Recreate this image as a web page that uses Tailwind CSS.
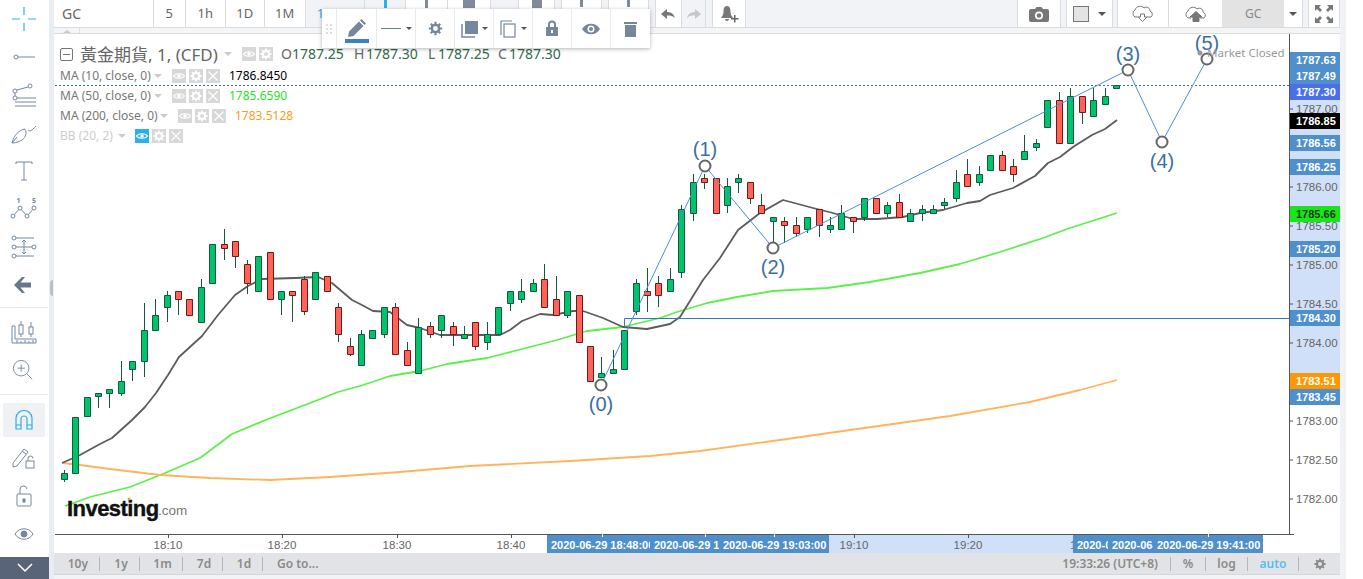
<!DOCTYPE html>
<html lang="zh-Hant">
<head>
<meta charset="utf-8">
<title>GC chart</title>
<script src="https://cdn.jsdelivr.net/npm/@tailwindcss/browser@4"></script>
</head>
<body class="w-[1363px] h-[579px] overflow-hidden bg-white flex font-['Noto_Sans','Noto_Sans_CJK_TC',sans-serif] text-[#666]">

<svg width="0" height="0" class="absolute">
  <symbol id="s-eye" viewBox="0 0 14 14"><path d="M1.5 7C3.5 4 10.500 4 12.500 7C10.500 10 3.500 10 1.500 7Z" fill="none" stroke="currentColor" stroke-width="1.200"/><circle cx="7" cy="7" r="1.800" fill="currentColor"/></symbol>
  <symbol id="s-gear" viewBox="0 0 14 14"><circle cx="7" cy="7" r="3" fill="none" stroke="currentColor" stroke-width="2"/><path d="M7 1.500V4M7 10V12.500M1.500 7H4M10 7H12.500M3.100 3.100L4.900 4.900M9.100 9.100L10.900 10.900M3.100 10.900L4.900 9.100M9.100 4.900L10.900 3.100" stroke="currentColor" stroke-width="1.800"/></symbol>
  <symbol id="s-x" viewBox="0 0 14 14"><path d="M2.500 2.500L11.500 11.500M11.500 2.500L2.500 11.500" stroke="currentColor" stroke-width="1.300"/></symbol>
</svg>

<!-- left toolbar -->
<aside class="w-[49px] h-[579px] shrink-0 flex flex-col text-[#7388a0]">
  <div class="w-[47px] flex flex-col items-center">
  <div class="h-[38px] w-full flex items-center justify-center">
    <svg width="24" height="24" viewBox="0 0 24 24" fill="none" stroke="#2db0ea" stroke-width="1.200"><path d="M12 0V8M12 16V24M0 12H8M16 12H24"/></svg>
  </div>
  <div class="h-[38px] w-full flex items-center justify-center">
    <svg width="24" height="14" viewBox="0 0 24 14" fill="none" stroke="currentColor" stroke-width="1"><circle cx="4" cy="7" r="2"/><path d="M6 7H23"/></svg>
  </div>
  <div class="h-[39px] w-full flex items-center justify-center">
    <svg width="26" height="26" viewBox="0 0 26 26" fill="none" stroke="currentColor" stroke-width="1"><circle cx="4" cy="8" r="2"/><circle cx="19" cy="3" r="2"/><circle cx="4" cy="15" r="2"/><path d="M6 7L17 4M4 10V13M6 15H25M4 19H25M4 23H25"/></svg>
  </div>
  <div class="h-[38px] w-full flex items-center justify-center">
    <svg width="26" height="22" viewBox="0 0 26 22" fill="none" stroke="currentColor" stroke-width="1"><path d="M1 20C3 12 8 7 14 6C16 10 15 14 11 17C8 19 4 20 1 20ZM1 20L6 14M17 7C19 9 20 8 25 3"/></svg>
  </div>
  <div class="h-[36px] w-full flex items-center justify-center">
    <svg width="18" height="20" viewBox="0 0 18 20" fill="none" stroke="currentColor" stroke-width="1"><path d="M1 3V1H17V3M9 1V19M6 19H12"/></svg>
  </div>
  <div class="h-[38px] w-full flex items-center justify-center">
    <svg width="28" height="24" viewBox="0 0 28 24" fill="none" stroke="currentColor" stroke-width="1"><circle cx="3" cy="20" r="2"/><circle cx="10" cy="12" r="2"/><circle cx="17" cy="20" r="2"/><circle cx="24" cy="12" r="2"/><path d="M4.500 18.500L8.700 13.500M11.300 13.500L15.700 18.500M18.400 18.500L22.700 13.500"/><text x="6.500" y="7" font-size="7" fill="currentColor" stroke="none" font-weight="700">1</text><text x="22" y="7" font-size="7" fill="currentColor" stroke="none" font-weight="700">5</text></svg>
  </div>
  <div class="h-[40px] w-full flex items-center justify-center">
    <svg width="26" height="24" viewBox="0 0 26 24" fill="none" stroke="currentColor" stroke-width="1"><circle cx="3" cy="3" r="2"/><circle cx="3" cy="12" r="2"/><circle cx="3" cy="21" r="2"/><circle cx="23" cy="12" r="2"/><path d="M5 3H23M5 12H21M5 21H23M13 5V19M11 7L13 5L15 7M11 17L13 19L15 17"/></svg>
  </div>
  <div class="h-[41px] pb-[4px] w-[49px] flex items-center justify-center border-b border-[#e4eaf0] pr-[2px]">
    <svg width="18" height="16" viewBox="0 0 18 16" fill="#66788e"><path d="M0 8L8 0H11L6.500 5.500H17V10.500H6.500L11 16H8Z"/></svg>
  </div>
  <div class="h-[48px] w-full flex items-center justify-center">
    <svg width="26" height="24" viewBox="0 0 26 24" fill="none" stroke="currentColor" stroke-width="1"><path d="M1 6H4V19H25V23H1ZM6 23V20M10 23V21M14 23V20M18 23V21M22 23V20"/><rect x="8" y="5" width="4" height="9"/><path d="M10 1V5M10 14V17"/><rect x="18" y="7" width="4" height="7"/><path d="M20 2V7M20 14V17"/></svg>
  </div>
  <div class="h-[39px] pb-[10px] w-[49px] flex items-center justify-center border-b border-[#e4eaf0] pr-[2px]">
    <svg width="22" height="22" viewBox="0 0 24 24" fill="none" stroke="currentColor" stroke-width="1"><circle cx="10" cy="10" r="8.500"/><path d="M16 16L22 22M6 10H14M10 6V14"/></svg>
  </div>
  <div class="h-[42px] w-full pt-[8px] flex justify-center">
    <div class="w-[42px] h-[34px] rounded-[2px] bg-[#eff1f4] flex items-center justify-center">
      <svg width="18" height="20" viewBox="0 0 18 20" fill="none" stroke="#2db0ea" stroke-width="1.200"><path d="M1 19V8A8 7.500 0 0 1 17 8V19H12V9A3 3 0 0 0 6 9V19ZM1 15H6M12 15H17"/></svg>
    </div>
  </div>
  <div class="h-[38px] w-full flex items-center justify-center pt-[4px]">
    <svg width="24" height="22" viewBox="0 0 24 22" fill="none" stroke="currentColor" stroke-width="1"><path d="M1 16L12 2L16 5L5 19L1 20ZM10 4L14 7"/><rect x="14" y="14" width="8" height="7"/><path d="M16 14V11.500A2.500 2.500 0 0 1 21 11.500"/></svg>
  </div>
  <div class="h-[42px] w-full flex items-center justify-center">
    <svg width="16" height="22" viewBox="0 0 16 22" fill="none" stroke="currentColor" stroke-width="1"><rect x="1" y="9" width="14" height="12" rx="1"/><path d="M4 9V5A3.500 3.500 0 0 1 11 4"/><rect x="7" y="14" width="2" height="3" fill="currentColor"/></svg>
  </div>
  <div class="h-[34px] w-full flex items-center justify-center">
    <svg width="20" height="14" viewBox="0 0 20 14" fill="none" stroke="currentColor" stroke-width="1"><path d="M1 7C5 0 15 0 19 7C15 14 5 14 1 7Z"/><circle cx="10" cy="7" r="3" fill="currentColor"/></svg>
  </div>
  </div>
  <div class="mt-auto h-[22px] w-full bg-[#5a6478] flex items-center justify-center">
    <svg width="20" height="12" viewBox="0 0 20 12" fill="none" stroke="#fff" stroke-width="1.500"><path d="M3 2L10 9L17 2"/></svg>
  </div>
</aside>

<!-- splitter -->
<div class="w-[5px] h-[579px] shrink-0 bg-[#e9ecf1] relative">
  <div class="absolute left-[1px] top-[280px] w-[3px] h-[16px] rounded-l-full bg-[#bcc0c6]"></div>
</div>

<!-- main column -->
<main class="w-[1286px] h-[579px] shrink-0 flex flex-col relative bg-[#f1f3f6]">

  <!-- top toolbar -->
  <header class="h-[28px] flex border-b border-[#d9dde2] text-[13px] text-[#666]">
    <div class="w-[99px] bg-white px-2 flex items-center text-[14px]">GC</div>
    <div class="w-[32px] bg-white border-l border-[#d9dde2] flex items-center justify-center">5</div>
    <div class="w-[40px] bg-white border-l border-[#d9dde2] flex items-center justify-center">1h</div>
    <div class="w-[39px] bg-white border-l border-[#d9dde2] flex items-center justify-center">1D</div>
    <div class="w-[41px] bg-white border-l border-[#d9dde2] flex items-center justify-center">1M</div>
    <div class="w-[53px] bg-[#f1f3f6] border-l border-[#d9dde2] flex items-center pl-[11px] text-[#2db0ea]">1m</div>
    <div class="w-[6px]"></div>
    <div class="w-[43px] bg-[#f1f3f6] border-x border-[#d9dde2] overflow-hidden flex justify-center"><div class="w-[3px] h-[8px] bg-[#2db0ea]"></div></div>
    <div class="w-[42px] bg-white border-r border-[#d9dde2] overflow-hidden flex justify-center"><div class="w-[3px] h-[8px] bg-[#7f8b99]"></div></div>
    <div class="w-[43px] bg-white border-r border-[#d9dde2] overflow-hidden flex justify-center"><div class="w-[12px] h-[8px] bg-[#7f8b99]"></div></div>
    <div class="w-[27px]"></div>
    <div class="w-[37px] bg-white border-x border-[#d9dde2] overflow-hidden flex justify-center"><div class="w-[10px] h-[8px] bg-[#7f8b99]"></div></div>
    <div class="w-[6px]"></div>
    <div class="w-[41px] bg-white border-x border-[#d9dde2] overflow-hidden flex justify-center"><div class="w-[3px] h-[7px] bg-[#7f8b99]"></div></div>
    <div class="w-[6px]"></div>
    <div class="w-[41px] bg-white border-x border-[#d9dde2] overflow-hidden flex justify-center"><div class="w-[3px] h-[7px] bg-[#7f8b99]"></div></div>
    <div class="w-[6px]"></div>
    <div class="w-[26px] bg-white border-l border-[#d9dde2] flex items-center justify-center">
      <svg width="15" height="12" viewBox="0 0 15 12" fill="#777"><path d="M0 6L6 1V4C10 4 13 6 14 10C12 8 10 7.500 6 7.500V11Z"/></svg>
    </div>
    <div class="w-[25px] bg-[#f1f3f6] border-x border-[#d9dde2] flex items-center justify-center">
      <svg width="15" height="12" viewBox="0 0 15 12" fill="#c4c7cb"><path d="M15 6L9 1V4C5 4 2 6 1 10C3 8 5 7.500 9 7.500V11Z"/></svg>
    </div>
    <div class="w-[6px]"></div>
    <div class="w-[34px] bg-white border-x border-[#d9dde2] flex items-center justify-center">
      <svg width="20" height="20" viewBox="0 0 20 20" fill="#777"><path d="M8 2C5 2 4.500 5 4.500 8C4.500 11 3 12 2 14H14C13 12 11.500 11 11.500 8C11.500 5 11 2 8 2ZM6 15A2 2 0 0 0 10 15Z"/><path d="M12 14H15V11H16.500V14H19.500V15.500H16.500V18.500H15V15.500H12Z" fill="#666"/></svg>
    </div>
    <div class="w-[271px]"></div>
    <div class="w-[45px] bg-white border-x border-[#d9dde2] flex items-center justify-center">
      <svg width="20" height="16" viewBox="0 0 20 16" fill="#777"><path fill-rule="evenodd" d="M2 3H6L7.500 1H12.500L14 3H18A2 2 0 0 1 20 5V14A2 2 0 0 1 18 16H2A2 2 0 0 1 0 14V5A2 2 0 0 1 2 3ZM10 5.500A4 4 0 1 0 10 13.500A4 4 0 1 0 10 5.500Z"/><circle cx="10" cy="9.500" r="2.300"/></svg>
    </div>
    <div class="w-[5px]"></div>
    <div class="w-[47px] bg-white border-x border-[#d9dde2] flex items-center gap-[9px] pl-[6px]">
      <div class="w-[16px] h-[16px] bg-[#e3e3e3] border border-[#777]"></div>
      <div class="w-0 h-0 border-x-[4px] border-x-transparent border-t-[4px] border-t-[#555]"></div>
    </div>
    <div class="w-[4px]"></div>
    <div class="w-[51px] bg-white border-l border-[#d9dde2] flex items-center justify-center">
      <svg width="26" height="17" viewBox="0 0 26 17" fill="none" stroke="#777" stroke-width="1"><path d="M8 12H5A4 4 0 0 1 5 5C6 1 12 0 14 3C17 1 20 3 20 6A3.500 3.500 0 0 1 21 12H17M10.500 9H14.500V12H17L12.500 16.500L8 12H10.500Z"/></svg>
    </div>
    <div class="w-[54px] bg-white border-l border-[#d9dde2] flex items-center justify-center">
      <svg width="26" height="17" viewBox="0 0 26 17" fill="none" stroke="#777" stroke-width="1"><path d="M8 13H5A4 4 0 0 1 5 6C6 2 12 1 14 4C17 2 20 4 20 7A3.500 3.500 0 0 1 21 13H17"/><path d="M13 6.500L19 12H16V16.500H10V12H7Z" fill="#777"/></svg>
    </div>
    <div class="w-[62px] bg-[#e3e3e3] flex items-center justify-center text-[12px] text-[#888]">GC</div>
    <div class="w-[19px] bg-white border-r border-[#d9dde2] flex items-center justify-center">
      <div class="w-0 h-0 border-x-[4px] border-x-transparent border-t-[4px] border-t-[#555]"></div>
    </div>
    <div class="w-[5px]"></div>
    <div class="w-[32px] bg-white border-x border-[#d9dde2] flex items-center justify-center">
      <svg width="20" height="20" viewBox="0 0 20 20" fill="#777"><path d="M1 1H7L5 3L8 6L6 8L3 5L1 7ZM19 1V7L17 5L14 8L12 6L15 3L13 1ZM1 19V13L3 15L6 12L8 14L5 17L7 19ZM19 19H13L15 17L12 14L14 12L17 15L19 13Z"/></svg>
    </div>
  </header>

  <!-- strip with the small tab -->
  <div class="h-[6px] border-b border-[#d9dde2] bg-[#f4f5f7] flex">
    <div class="w-[26px] border-r border-[#d9dde2] flex justify-center pt-[2px]"><div class="w-0 h-0 border-x-[4px] border-x-transparent border-b-[3px] border-b-[#ccc]"></div></div>
  </div>

  <!-- chart -->
  <section class="h-[519px] relative bg-white">
    <svg width="1286" height="519" viewBox="54 34 1286 519" class="block" font-family="'Liberation Sans',sans-serif">
      <!-- price axis selection band -->
      <rect x="1290" y="52" width="50" height="349" fill="#d0e0f8"/>
      <!-- time axis selection band -->
      <rect x="547" y="535" width="716" height="18" fill="#d0e0f8"/>

      <!-- last price line -->
      <path d="M55 85.500H1290" stroke="#3a62d8" stroke-dasharray="2 2" fill="none"/>

      <!-- moving averages -->
      <path d="M65 506L90 497L130 487L165 473L200 458L232 434L268 419L305 405L338 392L360 386L390 376L420 371L447 364L487 358L530 347L557 340L587 331L623 327L660 318L677 312L707 303L737 297L773 291L827 288L870 282L920 273L960 264L1000 252L1040 239L1070 228L1117 213" fill="none" stroke="#5cf04a" stroke-width="1.800" stroke-linejoin="round"/>
      <path d="M63 463L80 465L110 469L160 475L210 478L270 480L330 477L400 472L470 466L570 461L650 456L700 451L780 440L850 430L950 416L1030 402L1080 390L1117 380" fill="none" stroke="#ffb45c" stroke-width="1.800" stroke-linejoin="round"/>
      <path d="M62 463L80 455L100 444L112 438L132 420L145 407L156 393L168 375L179 357L202 336L218 315L235 295L248 286L262 279L295 278L318 277L332 283L352 300L360 304L373 311L390 312L407 325L420 328L440 335L467 335L500 335L510 330L522 321L540 314L553 315L573 311L583 311L603 318L623 327L647 329L670 324L680 317L703 280L720 258L738 230L760 213L783 200L813 208L833 213L853 219L877 219L903 217L920 213L943 210L967 203L980 201L990 195L1013 188L1035 176L1048 163L1060 157L1073 147L1092 135L1105 129L1117 120" fill="none" stroke="#5c5c5c" stroke-width="1.800" stroke-linejoin="round"/>

      <!-- wicks -->
      <path stroke="#14593f" fill="none" d="M64.500 470V482M98.500 393V408M109.500 389V408M121.500 361V396M132.500 369V381M144.500 303V377M155.500 299V315M167.500 291V322M178.500 299V315M201.500 279V287M224.500 229V260M235.500 256V268M247.500 260V294M281.500 299V315M292.500 295V322M304.500 276V315M338.500 303V342M350.500 338V356M361.500 330V334M384.500 334V338M395.500 303V307M407.500 342V350M418.500 318V327M430.500 322V338M441.500 330V338M453.500 322V346M464.500 326V334M475.500 346V350M487.500 322V350M510.500 303V311M521.500 279V303M533.500 279V283M544.500 264V279M556.500 276V299M567.500 315V318M601.500 357V373M613.500 350V369M636.500 279V315M647.500 268V312M658.500 276V307M670.500 268V279M681.500 205V278M693.500 174V221M704.500 174V189M727.500 178V213M738.500 174V193M750.500 198V204M761.500 194V205M773.500 221V242M784.500 217V243M796.500 217V237M807.500 229V233M819.500 225V237M830.500 217V233M841.500 205V213M853.500 221V233M864.500 217V221M887.500 202V217M899.500 194V202M910.500 209V213M922.500 205V221M933.500 205V209M944.500 198V209M956.500 170V202M967.500 159V174M979.500 166V186M1002.500 151V155M1013.500 159V182M1024.500 135V151M1036.500 139V151M1059.500 92V100M1070.500 88V96M1082.500 112V124M1093.500 88V100M1105.500 88V96"/>

      <!-- green bodies -->
      <path fill="#00c36b" stroke="#14593f" d="M61.500 473.500h6V479.500h-6zM72.500 417.500h6V473.500h-6zM84.500 397.500h6V416.500h-6zM95.500 393.500h6V396.500h-6zM106.500 389.500h6V393.500h-6zM118.500 381.500h6V393.500h-6zM129.500 361.500h6V369.500h-6zM141.500 330.500h6V361.500h-6zM152.500 315.500h6V330.500h-6zM164.500 295.500h6V307.500h-6zM198.500 287.500h6V322.500h-6zM209.500 244.500h6V283.500h-6zM255.500 256.500h6V291.500h-6zM278.500 291.500h6V299.500h-6zM312.500 272.500h6V299.500h-6zM358.500 334.500h6V365.500h-6zM369.500 330.500h6V338.500h-6zM381.500 307.500h6V334.500h-6zM415.500 327.500h6V373.500h-6zM438.500 315.500h6V330.500h-6zM461.500 334.500h6V338.500h-6zM484.500 334.500h6V342.500h-6zM495.500 307.500h6V334.500h-6zM507.500 291.500h6V303.500h-6zM518.500 291.500h6V299.500h-6zM530.500 283.500h6V291.500h-6zM564.500 291.500h6V315.500h-6zM598.500 373.500h6V377.500h-6zM610.500 369.500h6V373.500h-6zM621.500 330.500h6V369.500h-6zM633.500 283.500h6V311.500h-6zM667.500 279.500h6V291.500h-6zM678.500 209.500h6V272.500h-6zM690.500 182.500h6V213.500h-6zM724.500 186.500h6V205.500h-6zM735.500 178.500h6V182.500h-6zM770.500 217.500h6V221.500h-6zM804.500 217.500h6V229.500h-6zM827.500 225.500h6V229.500h-6zM838.500 213.500h6V229.500h-6zM861.500 198.500h6V217.500h-6zM884.500 205.500h6V213.500h-6zM907.500 213.500h6V221.500h-6zM919.500 209.500h6V213.500h-6zM930.500 209.500h6V213.500h-6zM941.500 202.500h6V205.500h-6zM953.500 182.500h6V198.500h-6zM976.500 174.500h6V182.500h-6zM987.500 155.500h6V170.500h-6zM1021.500 151.500h6V159.500h-6zM1033.500 143.500h6V147.500h-6zM1044.500 100.500h6V127.500h-6zM1067.500 96.500h6V143.500h-6zM1090.500 100.500h6V116.500h-6zM1102.500 96.500h6V104.500h-6zM1113.500 85.500h6V88.500h-6z"/>

      <!-- red bodies -->
      <path fill="#ff6358" stroke="#701a18" d="M175.500 291.500h6V299.500h-6zM186.500 299.500h6V315.500h-6zM221.500 244.500h6V248.500h-6zM232.500 241.500h6V256.500h-6zM244.500 264.500h6V283.500h-6zM267.500 252.500h6V299.500h-6zM289.500 291.500h6V295.500h-6zM301.500 279.500h6V311.500h-6zM324.500 276.500h6V291.500h-6zM335.500 307.500h6V334.500h-6zM347.500 346.500h6V354.500h-6zM392.500 307.500h6V354.500h-6zM404.500 350.500h6V365.500h-6zM427.500 326.500h6V334.500h-6zM450.500 326.500h6V334.500h-6zM472.500 322.500h6V346.500h-6zM541.500 279.500h6V307.500h-6zM553.500 299.500h6V315.500h-6zM576.500 295.500h6V342.500h-6zM587.500 346.500h6V381.500h-6zM644.500 291.500h6V295.500h-6zM655.500 283.500h6V295.500h-6zM701.500 178.500h6V182.500h-6zM713.500 178.500h6V213.500h-6zM747.500 182.500h6V198.500h-6zM758.500 205.500h6V213.500h-6zM781.500 221.500h6V225.500h-6zM793.500 225.500h6V233.500h-6zM816.500 209.500h6V225.500h-6zM850.500 217.500h6V221.500h-6zM873.500 198.500h6V213.500h-6zM896.500 202.500h6V217.500h-6zM964.500 174.500h6V186.500h-6zM999.500 155.500h6V170.500h-6zM1010.500 166.500h6V174.500h-6zM1056.500 100.500h6V143.500h-6zM1079.500 96.500h6V112.500h-6z"/>

      <!-- horizontal line drawing -->
      <path d="M624.500 327V318.500H1290" fill="none" stroke="#2b7bc4"/>
      <!-- wave -->
      <path d="M601 385L705 166L773 248L1128 70L1162 142L1207 59" fill="none" stroke="#4a90d9"/>
      <g fill="#fff" stroke="#666" stroke-width="2">
        <circle cx="601" cy="385" r="5.500"/><circle cx="705" cy="166" r="5.500"/><circle cx="773" cy="248" r="5.500"/><circle cx="1128" cy="70" r="5.500"/><circle cx="1162" cy="142" r="5.500"/><circle cx="1207" cy="59" r="5.500"/>
      </g>
      <g fill="#3c6f9f" font-size="20" text-anchor="middle">
        <text x="601" y="411">(0)</text><text x="705" y="156">(1)</text><text x="773" y="274">(2)</text><text x="1128" y="61">(3)</text><text x="1162" y="168">(4)</text><text x="1207" y="50">(5)</text>
      </g>
      <circle cx="1200" cy="53" r="2.500" fill="#999"/>
      <text x="1207" y="57" font-size="11.500" fill="#999" font-family="'Noto Sans',sans-serif">Market Closed</text>

      <!-- axes -->
      <path d="M1289.500 34V534.500H55M1289.500 534.500H1294" fill="none" stroke="#555"/>
      <path d="M1290 59h3M1290 76h3M1290 92h3M1290 109h3M1290 121h3M1290 143h3M1290 167h3M1290 187h3M1290 214h3M1290 226h3M1290 249h3M1290 265h3M1290 304h3M1290 318h3M1290 343h3M1290 381h3M1290 397h3M1290 421h3M1290 460h3M1290 499h3M168.500 535v3M282.500 535v3M397.500 535v3M511.500 535v3M854.500 535v3M968.500 535v3" stroke="#555" fill="none"/>

      <!-- plain price labels -->
      <g font-size="11.500" fill="#666">
        <text x="1296" y="113">1787.00</text><text x="1296" y="191">1786.00</text><text x="1296" y="230">1785.50</text><text x="1296" y="269">1785.00</text><text x="1296" y="308">1784.50</text><text x="1296" y="347">1784.00</text><text x="1296" y="425">1783.00</text><text x="1296" y="464">1782.50</text><text x="1296" y="503">1782.00</text>
      </g>
      <!-- highlighted price labels -->
      <g>
        <rect x="1290" y="52" width="50" height="33" fill="#4f8fcb"/>
        <rect x="1290" y="84" width="50" height="16" fill="#4a6fe8"/>
        <rect x="1290" y="113" width="50" height="16" fill="#000"/>
        <rect x="1290" y="135" width="50" height="16" fill="#4f8fcb"/>
        <rect x="1290" y="159" width="50" height="16" fill="#4f8fcb"/>
        <rect x="1290" y="206" width="50" height="16" fill="#19e619"/>
        <rect x="1290" y="241" width="50" height="16" fill="#4f8fcb"/>
        <rect x="1290" y="310" width="50" height="16" fill="#4f8fcb"/>
        <rect x="1290" y="373" width="50" height="16" fill="#ff9800"/>
        <rect x="1290" y="389" width="50" height="16" fill="#4f8fcb"/>
      </g>
      <g font-size="11" font-weight="700" fill="#fff">
        <text x="1296" y="64">1787.63</text><text x="1296" y="80">1787.49</text><text x="1296" y="96">1787.30</text><text x="1296" y="125">1786.85</text><text x="1296" y="147">1786.56</text><text x="1296" y="171">1786.25</text><text x="1296" y="218" fill="#1a3a1a">1785.66</text><text x="1296" y="253">1785.20</text><text x="1296" y="322">1784.30</text><text x="1296" y="385">1783.51</text><text x="1296" y="401">1783.45</text>
      </g>

      <!-- time labels -->
      <g font-size="11.500" fill="#666" text-anchor="middle">
        <text x="168" y="549">18:10</text><text x="282" y="549">18:20</text><text x="397" y="549">18:30</text><text x="511" y="549">18:40</text><text x="854" y="549">19:10</text><text x="968" y="549">19:20</text>
      </g>
      <text x="1070" y="549" font-size="11.500" fill="#666">1</text>
      <g font-size="11" font-weight="700" fill="#fff">
        <rect x="547" y="535" width="104" height="18" fill="#4f8fcb"/><text x="551" y="549">2020-06-29 18:48:00</text>
        <rect x="650" y="535" width="70" height="18" fill="#4f8fcb"/><text x="654" y="549">2020-06-29 19:03:00</text>
        <rect x="719" y="535" width="110" height="18" fill="#4f8fcb"/><text x="723" y="549">2020-06-29 19:03:00</text>
        <rect x="1073" y="535" width="36" height="18" fill="#4f8fcb"/><text x="1077" y="549">2020-06-29</text>
        <rect x="1108" y="535" width="46" height="18" fill="#4f8fcb"/><text x="1112" y="549">2020-06-29</text>
        <rect x="1153" y="535" width="110" height="18" fill="#4f8fcb"/><text x="1157" y="549">2020-06-29 19:41:00</text>
      </g>
      <path d="M602.500 534v3M705.500 534v3M774.500 534v3M1208.500 534v3" stroke="#fff" fill="none"/>

      <!-- watermark -->
      <text x="67" y="516" font-size="22" font-weight="700" fill="#111" stroke="#111" stroke-width="0.400" letter-spacing="-0.550">Investing</text>
      <text x="158" y="515" font-size="13.500" fill="#777">.com</text>
      <circle cx="129" cy="499" r="1.500" fill="#f7a01d"/>
    </svg>

    <!-- legend overlay -->
    <div class="absolute left-[6px] top-[10px] flex flex-col items-start">
      <div class="h-[22px] pb-[2px] flex items-center">
        <div class="w-[13px] h-[13px] border border-[#777] rounded-[2px] flex items-center justify-center"><div class="w-[7px] h-px bg-[#777]"></div></div>
        <div class="w-[143px] ml-[7px] text-[17px] leading-none whitespace-nowrap text-[#666]">黃金期貨, 1, (CFD)</div>
        <div class="w-0 h-0 border-x-[4px] border-x-transparent border-t-[4px] border-t-[#ccc] ml-[1px]"></div>
        <div class="w-[14px] h-[14px] bg-[#d8d8d8] text-white ml-[10px]"><svg width="14" height="14"><use href="#s-eye"/></svg></div>
        <div class="w-[14px] h-[14px] bg-[#d8d8d8] text-white ml-[3px]"><svg width="14" height="14"><use href="#s-gear"/></svg></div>
        <div class="ml-[8px] text-[14px] leading-none whitespace-nowrap text-[#2f6a4c] flex">
          <span class="w-[11px] text-[#666]">O</span><span class="w-[62px]">1787.25</span>
          <span class="w-[12px] text-[#666]">H</span><span class="w-[62px]">1787.30</span>
          <span class="w-[10px] text-[#666]">L</span><span class="w-[60px]">1787.25</span>
          <span class="w-[11px] text-[#666]">C</span><span>1787.30</span>
        </div>
      </div>
      <div class="h-[20px] flex items-center text-[12px] text-[#777] whitespace-nowrap">
        <span class="w-[89px]">MA (10, close, 0)</span>
        <div class="w-0 h-0 border-x-[4px] border-x-transparent border-t-[4px] border-t-[#ccc] ml-[5px]"></div>
        <div class="w-[14px] h-[14px] bg-[#d8d8d8] text-white ml-[10px]"><svg width="14" height="14"><use href="#s-eye"/></svg></div>
        <div class="w-[14px] h-[14px] bg-[#d8d8d8] text-white ml-[3px]"><svg width="14" height="14"><use href="#s-gear"/></svg></div>
        <div class="w-[14px] h-[14px] bg-[#d8d8d8] text-white ml-[3px]"><svg width="14" height="14"><use href="#s-x"/></svg></div>
        <span class="ml-[9px] text-black">1786.8450</span>
      </div>
      <div class="h-[20px] flex items-center text-[12px] text-[#777] whitespace-nowrap">
        <span class="w-[89px]">MA (50, close, 0)</span>
        <div class="w-0 h-0 border-x-[4px] border-x-transparent border-t-[4px] border-t-[#ccc] ml-[5px]"></div>
        <div class="w-[14px] h-[14px] bg-[#d8d8d8] text-white ml-[10px]"><svg width="14" height="14"><use href="#s-eye"/></svg></div>
        <div class="w-[14px] h-[14px] bg-[#d8d8d8] text-white ml-[3px]"><svg width="14" height="14"><use href="#s-gear"/></svg></div>
        <div class="w-[14px] h-[14px] bg-[#d8d8d8] text-white ml-[3px]"><svg width="14" height="14"><use href="#s-x"/></svg></div>
        <span class="ml-[9px] text-[#1ee61e]">1785.6590</span>
      </div>
      <div class="h-[20px] flex items-center text-[12px] text-[#777] whitespace-nowrap">
        <span class="w-[95px]">MA (200, close, 0)</span>
        <div class="w-0 h-0 border-x-[4px] border-x-transparent border-t-[4px] border-t-[#ccc] ml-[5px]"></div>
        <div class="w-[14px] h-[14px] bg-[#d8d8d8] text-white ml-[10px]"><svg width="14" height="14"><use href="#s-eye"/></svg></div>
        <div class="w-[14px] h-[14px] bg-[#d8d8d8] text-white ml-[3px]"><svg width="14" height="14"><use href="#s-gear"/></svg></div>
        <div class="w-[14px] h-[14px] bg-[#d8d8d8] text-white ml-[3px]"><svg width="14" height="14"><use href="#s-x"/></svg></div>
        <span class="ml-[9px] text-[#ff9a1f]">1783.5128</span>
      </div>
      <div class="h-[20px] flex items-center text-[12px] text-[#ccc] whitespace-nowrap">
        <span class="w-[53px]">BB (20, 2)</span>
        <div class="w-0 h-0 border-x-[4px] border-x-transparent border-t-[4px] border-t-[#ccc] ml-[5px]"></div>
        <div class="w-[14px] h-[14px] bg-[#2db0ea] text-white ml-[9px]"><svg width="14" height="14"><use href="#s-eye"/></svg></div>
        <div class="w-[14px] h-[14px] bg-[#d8d8d8] text-white ml-[3px]"><svg width="14" height="14"><use href="#s-gear"/></svg></div>
        <div class="w-[14px] h-[14px] bg-[#d8d8d8] text-white ml-[3px]"><svg width="14" height="14"><use href="#s-x"/></svg></div>
      </div>
    </div>
  </section>

  <!-- bottom bar -->
  <footer class="h-[22px] bg-[#e2e3e6] border-b border-[#d5d7da] flex items-center text-[12px] font-semibold text-[#8a8a8a]">
    <div class="w-[46px] pr-[11px] border-r border-[#b5b7ba] h-[14px] flex items-center justify-end">10y</div>
    <div class="w-[40px] pl-[3px] border-r border-[#b5b7ba] h-[14px] flex items-center justify-center">1y</div>
    <div class="w-[43px] pl-[3px] border-r border-[#b5b7ba] h-[14px] flex items-center justify-center">1m</div>
    <div class="w-[40px] pl-[3px] border-r border-[#b5b7ba] h-[14px] flex items-center justify-center">7d</div>
    <div class="w-[40px] pl-[3px] border-r border-[#b5b7ba] h-[14px] flex items-center justify-center">1d</div>
    <div class="ml-[14px]">Go to...</div>
    <div class="ml-auto pr-[12px] border-r border-[#b5b7ba] h-[14px] flex items-center">19:33:26 (UTC+8)</div>
    <div class="w-[35px] border-r border-[#b5b7ba] h-[14px] flex items-center justify-center">%</div>
    <div class="w-[42px] border-r border-[#b5b7ba] h-[14px] flex items-center justify-center">log</div>
    <div class="w-[51px] border-r border-[#b5b7ba] h-[14px] flex items-center justify-center text-[#5bbde8]">auto</div>
    <div class="w-[41px] flex items-center justify-center text-[#8a8a8a]"><svg width="14" height="14"><use href="#s-gear"/></svg></div>
  </footer>

  <!-- floating drawing toolbar -->
  <div class="absolute left-[268px] top-[9px] w-[328px] h-[39px] bg-white shadow-[0_1px_4px_rgba(0,0,0,0.3)] flex text-[#76879c]">
    <div class="w-[14px] flex items-center justify-center">
      <div class="grid grid-cols-2 gap-[2px]">
        <div class="w-[2px] h-[2px] bg-[#ddd]"></div><div class="w-[2px] h-[2px] bg-[#ddd]"></div>
        <div class="w-[2px] h-[2px] bg-[#ddd]"></div><div class="w-[2px] h-[2px] bg-[#ddd]"></div>
        <div class="w-[2px] h-[2px] bg-[#ddd]"></div><div class="w-[2px] h-[2px] bg-[#ddd]"></div>
      </div>
    </div>
    <div class="w-[40px] border-l border-[#e8eaed] flex flex-col items-center pt-[10px] relative">
      <svg width="18" height="18" viewBox="0 0 18 18" fill="currentColor"><path d="M0 18L1 12.500L11 2.500L15.500 7L5.500 17ZM12 1.500L13.500 0L18 4.500L16.500 6Z"/></svg>
      <div class="absolute left-[8px] top-[30px] w-[24px] h-[4px] bg-[#3b7fc4]"></div>
    </div>
    <div class="w-[39px] border-l border-[#e8eaed] flex items-center justify-center gap-[5px]">
      <div class="w-[20px] h-px bg-[#5b7ea6]"></div>
      <div class="w-0 h-0 border-x-[3px] border-x-transparent border-t-[3px] border-t-[#555]"></div>
    </div>
    <div class="w-[39px] border-l border-[#e8eaed] flex items-center justify-center">
      <svg width="17" height="17"><use href="#s-gear"/></svg>
    </div>
    <div class="w-[39px] border-l border-[#e8eaed] flex items-center justify-center gap-[3px]">
      <svg width="18" height="18" viewBox="0 0 18 18" fill="currentColor"><rect x="4" y="1" width="13" height="13"/><path d="M1 4V17H14" fill="none" stroke="currentColor" stroke-width="1.500"/></svg>
      <div class="w-0 h-0 border-x-[3px] border-x-transparent border-t-[3px] border-t-[#555]"></div>
    </div>
    <div class="w-[39px] border-l border-[#e8eaed] flex items-center justify-center gap-[3px]">
      <svg width="18" height="18" viewBox="0 0 18 18" fill="none" stroke="currentColor" stroke-width="1.200"><path d="M1 15V1H12"/><rect x="4" y="4" width="11" height="13"/></svg>
      <div class="w-0 h-0 border-x-[3px] border-x-transparent border-t-[3px] border-t-[#555]"></div>
    </div>
    <div class="w-[39px] border-l border-[#e8eaed] flex items-center justify-center">
      <svg width="14" height="17" viewBox="0 0 14 17" fill="currentColor"><path fill-rule="evenodd" d="M1 7H3V4.500A4 4 0 0 1 11 4.500V7H13V16H1ZM5 7H9V4.500A2 2 0 0 0 5 4.500ZM6 10V13H8V10Z"/></svg>
    </div>
    <div class="w-[39px] border-l border-[#e8eaed] flex items-center justify-center">
      <svg width="18" height="12" viewBox="0 0 18 12"><path d="M0 6C4 -1 14 -1 18 6C14 13 4 13 0 6Z" fill="currentColor"/><circle cx="9" cy="6" r="3.500" fill="#fff"/><circle cx="9" cy="6" r="2" fill="currentColor"/></svg>
    </div>
    <div class="w-[40px] border-l border-[#e8eaed] flex items-center justify-center">
      <svg width="13" height="17" viewBox="0 0 13 17" fill="currentColor"><path d="M0 2H13V4H0ZM1 5H12V17H1Z"/></svg>
    </div>
  </div>
</main>

<!-- right margin -->
<div class="w-[6px] h-[579px] shrink-0 bg-[#f0f2f5]"></div>
</body>
</html>
